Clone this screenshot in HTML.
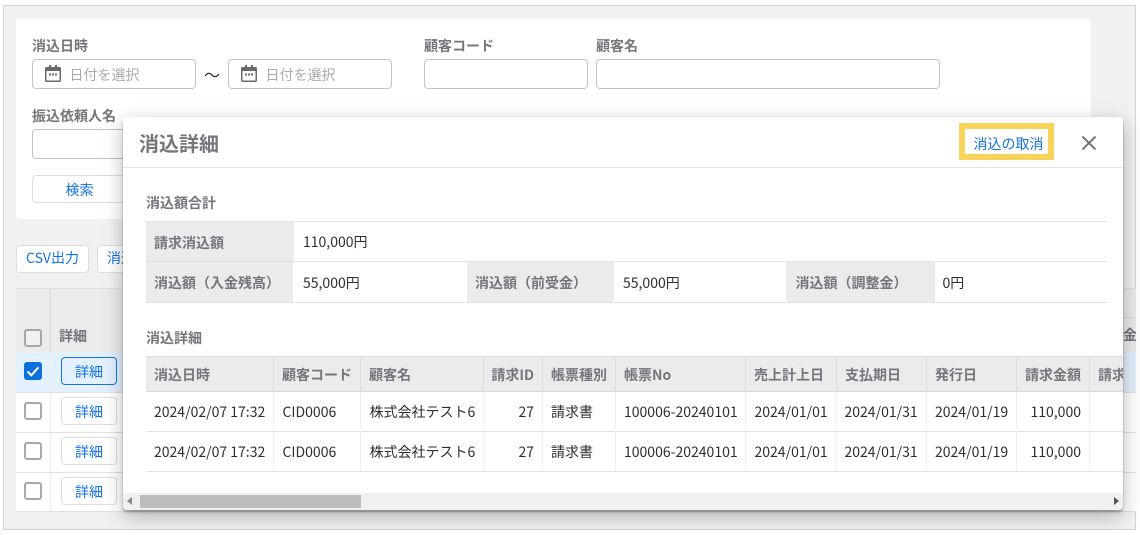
<!DOCTYPE html>
<html lang="ja"><head><meta charset="utf-8"><title>消込詳細</title>
<style>
html,body{margin:0;padding:0;background:#fff}
#p{position:relative;width:1140px;height:535px;overflow:hidden;background:#fff;font-family:"Noto Sans CJK JP","Liberation Sans",sans-serif;font-size:14px;color:#2e2e2e}
#p div,#p span.t{position:absolute;box-sizing:border-box}
.t{white-space:nowrap;line-height:20px}
.l{font-weight:700;color:#75757d}
.b{color:#1473e6}
.r{text-align:right}
.c{text-align:center}
.ph{color:#aaa}
.in{border:1px solid #c2c2c2;border-radius:4px;background:#fff;height:30px;top:59px}
.btn{border:1px solid #dedede;border-radius:4px;background:#fff}
.cb{left:24px;width:18px;height:18px;border:2px solid #a6a6b0;border-radius:3px;background:#fff}
.hl{background:#e2e2e2;height:1px}
.vl{width:1px}
</style></head><body><div id="p">
<div style="left:3px;top:5px;width:1133px;height:525px;background:#f1f1f1;border:1px solid #d4d4d4"></div>
<div style="left:16px;top:19px;width:1075px;height:200px;background:#fff;border-radius:4px"></div>

<span class="t l" style="left:32px;top:36px">消込日時</span>
<div class="in" style="left:32px;width:164px"></div>
<svg style="position:absolute;left:44px;top:64px" width="18" height="19" viewBox="0 0 18 19"><path fill="#6a6a6a" d="M2.500 3H5V1h2v2h4V1h2v2h2.500A1.500 1.500 0 0 1 17 4.500v12a1.500 1.500 0 0 1-1.500 1.500h-13A1.500 1.500 0 0 1 1 16.500v-12A1.500 1.500 0 0 1 2.500 3zM2.500 7v9.500h13V7z"/><path fill="#6a6a6a" d="M5 9.500h2v2H5zM8 9.500h2v2H8zM11 9.500h2v2h-2z"/></svg>
<span class="t ph" style="left:69.500px;top:65px">日付を選択</span>
<span class="t" style="left:204px;top:64px;font-size:16px">〜</span>
<div class="in" style="left:228px;width:164px"></div>
<svg style="position:absolute;left:240px;top:64px" width="18" height="19" viewBox="0 0 18 19"><path fill="#6a6a6a" d="M2.500 3H5V1h2v2h4V1h2v2h2.500A1.500 1.500 0 0 1 17 4.500v12a1.500 1.500 0 0 1-1.500 1.500h-13A1.500 1.500 0 0 1 1 16.500v-12A1.500 1.500 0 0 1 2.500 3zM2.500 7v9.500h13V7z"/><path fill="#6a6a6a" d="M5 9.500h2v2H5zM8 9.500h2v2H8zM11 9.500h2v2h-2z"/></svg>
<span class="t ph" style="left:265.500px;top:65px">日付を選択</span>
<span class="t l" style="left:424px;top:36px">顧客コード</span>
<div class="in" style="left:424px;width:164px"></div>
<span class="t l" style="left:596px;top:36px">顧客名</span>
<div class="in" style="left:596px;width:344px"></div>
<span class="t l" style="left:32px;top:106px">振込依頼人名</span>
<div class="in" style="left:32px;width:164px;top:129px"></div>
<div class="btn" style="left:32px;top:175px;width:95px;height:28px"></div>
<span class="t b c" style="left:32px;top:180px;width:95px">検索</span>

<div class="btn" style="left:16px;top:245px;width:73px;height:28px"></div>
<span class="t b c" style="left:16px;top:248px;width:73px">CSV出力</span>
<div class="btn" style="left:97px;top:245px;width:60px;height:28px"></div>
<span class="t b" style="left:107px;top:248px">消込</span>

<div style="left:16px;top:288px;width:1120px;height:64px;background:#ebebeb;border-top:1px solid #e0e0e0"></div>
<div style="left:1100px;top:317px;width:36px;height:1px;background:#dcdcdc"></div>
<div class="vl" style="left:50px;top:289px;height:63px;background:#d8d8d8"></div>
<div style="left:16px;top:352px;width:1120px;height:40px;background:#e3f0fd"></div>
<div class="hl" style="left:16px;top:392px;width:1120px"></div>
<div class="hl" style="left:16px;top:432px;width:1120px"></div>
<div class="hl" style="left:16px;top:472px;width:1120px"></div>
<div class="hl" style="left:16px;top:511px;width:1120px"></div>
<div style="left:16px;top:393px;width:1120px;height:39px;background:#fff"></div>
<div style="left:16px;top:433px;width:1120px;height:39px;background:#fff"></div>
<div style="left:16px;top:473px;width:1120px;height:38px;background:#fff"></div>
<div class="vl" style="left:50px;top:352px;height:160px;background:#efefef"></div>
<span class="t l" style="left:59px;top:326px">詳細</span>
<span class="t l" style="left:1123px;top:325px;width:13px;overflow:hidden">金</span>
<div class="cb" style="top:329px;background:#f1f1f1"></div>
<div class="cb" style="top:362px;background:#0b6fdc;border-color:#0b6fdc"></div>
<svg style="position:absolute;left:24px;top:362px" width="18" height="18" viewBox="0 0 18 18"><path d="M3.500 9.500l3.800 3.800 7.200-8" fill="none" stroke="#fff" stroke-width="2"/></svg>
<div class="cb" style="top:402px"></div>
<div class="cb" style="top:442px"></div>
<div class="cb" style="top:482px"></div>
<div class="btn" style="left:61px;top:357px;width:56px;height:28px;border-color:#1473e6;background:#e3f0fd"></div>
<div class="btn" style="left:61px;top:397px;width:56px;height:28px"></div>
<div class="btn" style="left:61px;top:437px;width:56px;height:28px"></div>
<div class="btn" style="left:61px;top:477px;width:56px;height:28px"></div>
<span class="t b c" style="left:61px;top:362px;width:56px">詳細</span>
<span class="t b c" style="left:61px;top:402px;width:56px">詳細</span>
<span class="t b c" style="left:61px;top:442px;width:56px">詳細</span>
<span class="t b c" style="left:61px;top:482px;width:56px">詳細</span>

<div style="left:123px;top:117px;width:1000px;height:393px;background:#fff;border-radius:4px;box-shadow:0 2px 2px rgba(0,0,0,.3),0 6px 20px rgba(0,0,0,.28)"></div>
<span class="t" style="left:139px;top:128px;font-size:20px;line-height:30px;font-weight:700;color:#75757d">消込詳細</span>
<div style="left:959px;top:123px;width:95px;height:37px;border:6px solid #f8d55a;background:#fff"></div>
<span class="t b" style="left:973.500px;top:134px">消込の取消</span>
<svg style="position:absolute;left:1081px;top:135px" width="16" height="16" viewBox="0 0 16 16"><path d="M1.500 1.500l13 13M14.500 1.500l-13 13" stroke="#777" stroke-width="2" fill="none"/></svg>
<div class="hl" style="left:123px;top:167px;width:1000px"></div>

<span class="t l" style="left:146px;top:193px">消込額合計</span>
<div style="left:146px;top:222px;width:148px;height:39px;background:#ebebeb"></div>
<div style="left:146px;top:262px;width:147px;height:40px;background:#ebebeb"></div>
<div style="left:467px;top:262px;width:147px;height:40px;background:#ebebeb"></div>
<div style="left:786px;top:262px;width:149px;height:40px;background:#ebebeb"></div>
<div class="hl" style="left:146px;top:221px;width:961px"></div>
<div class="hl" style="left:146px;top:261px;width:961px"></div>
<div class="hl" style="left:146px;top:302px;width:961px"></div>
<span class="t l" style="left:154px;top:233px">請求消込額</span>
<span class="t" style="left:303px;top:232px">110,000円</span>
<span class="t l" style="left:154px;top:273px">消込額（入金残高）</span>
<span class="t" style="left:303px;top:273px">55,000円</span>
<span class="t l" style="left:475px;top:273px">消込額（前受金）</span>
<span class="t" style="left:623px;top:273px">55,000円</span>
<span class="t l" style="left:795.500px;top:273px">消込額（調整金）</span>
<span class="t" style="left:942.500px;top:273px">0円</span>

<span class="t l" style="left:146px;top:328px">消込詳細</span>
<div style="left:146px;top:356px;width:977px;height:36px;background:#ebebeb;border-top:1px solid #dcdcdc;border-bottom:1px solid #d8d8d8"></div>
<div class="hl" style="left:146px;top:431px;width:977px"></div>
<div class="hl" style="left:146px;top:471px;width:977px"></div>
<div class="vl" style="left:273px;top:357px;height:34px;background:#dcdcdc"></div>
<div class="vl" style="left:360px;top:357px;height:34px;background:#dcdcdc"></div>
<div class="vl" style="left:483px;top:357px;height:34px;background:#dcdcdc"></div>
<div class="vl" style="left:542px;top:357px;height:34px;background:#dcdcdc"></div>
<div class="vl" style="left:615px;top:357px;height:34px;background:#dcdcdc"></div>
<div class="vl" style="left:745px;top:357px;height:34px;background:#dcdcdc"></div>
<div class="vl" style="left:836px;top:357px;height:34px;background:#dcdcdc"></div>
<div class="vl" style="left:926px;top:357px;height:34px;background:#dcdcdc"></div>
<div class="vl" style="left:1016px;top:357px;height:34px;background:#dcdcdc"></div>
<div class="vl" style="left:1089px;top:357px;height:34px;background:#dcdcdc"></div>
<div class="vl" style="left:273px;top:392px;height:79px;background:#efefef"></div>
<div class="vl" style="left:360px;top:392px;height:79px;background:#efefef"></div>
<div class="vl" style="left:483px;top:392px;height:79px;background:#efefef"></div>
<div class="vl" style="left:542px;top:392px;height:79px;background:#efefef"></div>
<div class="vl" style="left:615px;top:392px;height:79px;background:#efefef"></div>
<div class="vl" style="left:745px;top:392px;height:79px;background:#efefef"></div>
<div class="vl" style="left:836px;top:392px;height:79px;background:#efefef"></div>
<div class="vl" style="left:926px;top:392px;height:79px;background:#efefef"></div>
<div class="vl" style="left:1016px;top:392px;height:79px;background:#efefef"></div>
<div class="vl" style="left:1089px;top:392px;height:79px;background:#efefef"></div>

<span class="t l" style="left:154px;top:365px">消込日時</span>
<span class="t l" style="left:282px;top:365px">顧客コード</span>
<span class="t l" style="left:369px;top:365px">顧客名</span>
<span class="t l r" style="left:484px;top:365px;width:50px">請求ID</span>
<span class="t l" style="left:551px;top:365px">帳票種別</span>
<span class="t l" style="left:624px;top:365px">帳票No</span>
<span class="t l" style="left:754px;top:365px">売上計上日</span>
<span class="t l" style="left:845px;top:365px">支払期日</span>
<span class="t l" style="left:935px;top:365px">発行日</span>
<span class="t l r" style="left:1017px;top:365px;width:64px">請求金額</span>
<span class="t l" style="left:1098px;top:365px;width:25px;overflow:hidden">請求消込額</span>

<span class="t" style="left:154px;top:402px">2024/02/07 17:32</span>
<span class="t" style="left:282.500px;top:402px">CID0006</span>
<span class="t" style="left:369.500px;top:402px">株式会社テスト6</span>
<span class="t r" style="left:484px;top:402px;width:50px">27</span>
<span class="t" style="left:551px;top:402px">請求書</span>
<span class="t" style="left:624px;top:402px">100006-20240101</span>
<span class="t" style="left:754.500px;top:402px">2024/01/01</span>
<span class="t" style="left:844.500px;top:402px">2024/01/31</span>
<span class="t" style="left:935px;top:402px">2024/01/19</span>
<span class="t r" style="left:1017px;top:402px;width:64px">110,000</span>

<span class="t" style="left:154px;top:442px">2024/02/07 17:32</span>
<span class="t" style="left:282.500px;top:442px">CID0006</span>
<span class="t" style="left:369.500px;top:442px">株式会社テスト6</span>
<span class="t r" style="left:484px;top:442px;width:50px">27</span>
<span class="t" style="left:551px;top:442px">請求書</span>
<span class="t" style="left:624px;top:442px">100006-20240101</span>
<span class="t" style="left:754.500px;top:442px">2024/01/01</span>
<span class="t" style="left:844.500px;top:442px">2024/01/31</span>
<span class="t" style="left:935px;top:442px">2024/01/19</span>
<span class="t r" style="left:1017px;top:442px;width:64px">110,000</span>

<div style="left:123px;top:493px;width:1000px;height:17px;background:#f0f0f0;border-radius:0 0 4px 4px"></div>
<div style="left:140px;top:495px;width:221px;height:13px;background:#bdbdbd"></div>
<svg style="position:absolute;left:127px;top:497px" width="6" height="8" viewBox="0 0 6 8"><path d="M5 0v8L0 4z" fill="#8a8a8a"/></svg>
<svg style="position:absolute;left:1113px;top:497px" width="6" height="8" viewBox="0 0 6 8"><path d="M1 0v8l5-4z" fill="#555"/></svg>
</div></body></html>
